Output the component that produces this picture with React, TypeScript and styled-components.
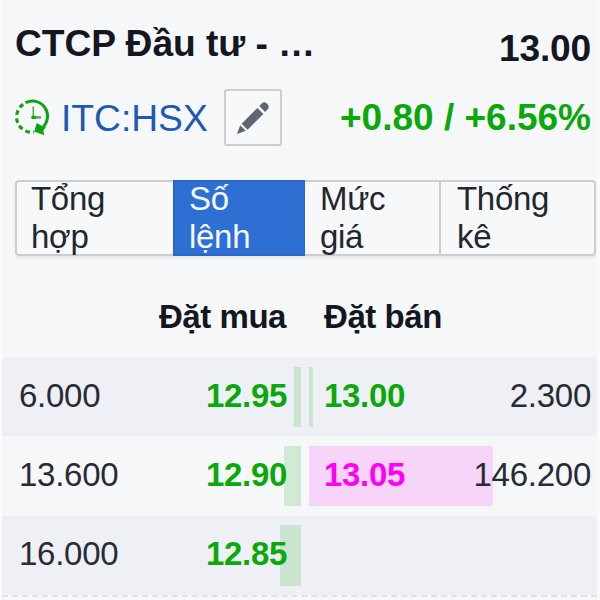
import React from "react";
import styled, { createGlobalStyle } from "styled-components";

const GlobalStyle = createGlobalStyle`
  * { box-sizing: border-box; }
  body { margin: 0; background: #f5f7f9; }
`;

const Panel = styled.main`
  width: 600px;
  height: 600px;
  overflow: hidden;
  display: flex;
  flex-direction: column;
  background: #f5f7f9;
  border-left: 2px solid #fafbfc;
  border-right: 3px solid #f9fafc;
  font-family: "Liberation Sans", Arial, sans-serif;
  color: #1f232b;
`;

const TitleRow = styled.header`
  display: flex;
  justify-content: space-between;
  height: 80px;
  flex: none;
  padding: 22px 6px 0 13px;
  font-size: 37.2px;
  line-height: 42px;
  font-weight: 700;
  color: #14171f;
`;

const Name = styled.span`
  letter-spacing: -0.06px;
  white-space: pre;
`;

const LastPrice = styled.span`
  padding-top: 5px;
  letter-spacing: -0.2px;
`;

const SymbolRow = styled.div`
  display: flex;
  align-items: center;
  height: 75px;
  flex: none;
  padding: 0 6px 0 13px;
`;

const ClockIcon = styled.svg`
  width: 36px;
  height: 38px;
  flex: none;
`;

const SymbolLink = styled.a`
  margin-left: 10px;
  width: 148px;
  font-size: 37.2px;
  line-height: 42px;
  color: #1d5ab0;
`;

const EditButton = styled.button`
  display: grid;
  place-items: center;
  width: 58px;
  height: 57px;
  margin-left: 15px;
  padding: 0;
  border: 2px solid #cccdd0;
  border-radius: 3px;
  background: #f6f8fa;
  flex: none;
`;

const Change = styled.span`
  margin-left: auto;
  padding-top: 1px;
  font-size: 37px;
  line-height: 42px;
  font-weight: 700;
  color: #0aa80a;
  white-space: nowrap;
`;

const Tabs = styled.nav`
  display: grid;
  grid-template-columns: 158px 132px 136px 155px;
  grid-template-rows: 76px;
  width: 581px;
  height: 76px;
  flex: none;
  margin: 25px 0 0 13px;
  border-radius: 4px;
  box-shadow: 0 2px 3px rgba(0, 0, 0, 0.07);
`;

const Tab = styled.button<{ $active?: boolean }>`
  display: flex;
  align-items: flex-start;
  height: 76px;
  padding: 0 14px;
  margin: 0;
  border: 2px solid ${(p) => (p.$active ? "#2a66c4" : "#cccdd0")};
  border-left-width: ${(p) => (p.$active ? "2px" : "1px")};
  border-right-width: ${(p) => (p.$active ? "1px" : "2px")};
  background: ${(p) => (p.$active ? "#2d6fd3" : "#f6f8fa")};
  color: ${(p) => (p.$active ? "#f5f8ff" : "#22262e")};
  font: 33px/38px "Liberation Sans", Arial, sans-serif;
  letter-spacing: -0.3px;
  text-align: left;
  &:first-child { border-left-width: 2px; border-right-width: 0; border-radius: 4px 0 0 4px; }
  &:nth-child(3) { border-left-width: 0; padding-left: 15px; }
  &:last-child { border-left-width: 0; border-radius: 0 4px 4px 0; padding-left: 16px; }
`;

const TabLabel = styled.span`
  display: block;
  width: min-content;
  margin-top: -2px;
`;

const Book = styled.section`
  display: flex;
  flex-direction: column;
  flex: none;
  border-bottom: 2px dashed #dfe1e3;
`;

const BookRow = styled.div<{ $shaded?: boolean }>`
  display: grid;
  grid-template-columns: 303px 1fr;
  height: 79.33px;
  background: ${(p) => (p.$shaded ? "#eef0f5" : "transparent")};
`;

const BookHead = styled(BookRow)`
  height: 101px;
  font-size: 33px;
  font-weight: 700;
  line-height: 38px;
  letter-spacing: -0.45px;
  padding-top: 42px;
  color: #14171f;
`;

const BidHead = styled.span`
  text-align: right;
  padding-right: 19px;
`;

const AskHead = styled.span`
  padding-left: 19px;
`;

const Side = styled.div<{ $ask?: boolean }>`
  position: relative;
  display: flex;
  align-items: center;
  justify-content: space-between;
  padding: ${(p) => (p.$ask ? "0 6px 2px 19px" : "0 18px 2px 17px")};
  font-size: 33px;
  line-height: 38px;
  letter-spacing: -0.3px;
`;

const Depth = styled.i<{ $ask?: boolean; $tone: Tone }>`
  position: absolute;
  top: 9.5px;
  height: 60.5px;
  ${(p) => (p.$ask ? "left: 4px;" : "right: 4.5px;")}
  background: ${(p) => (p.$tone === "ceiling" ? "rgba(255, 20, 240, 0.15)" : "rgba(10, 168, 10, 0.155)")};
`;

const Price = styled.b<{ $tone: Tone }>`
  position: relative;
  color: ${(p) => (p.$tone === "ceiling" ? "#ff00f5" : "#0aa80a")};
`;

const Volume = styled.span`
  position: relative;
  color: #272b34;
  letter-spacing: -0.25px;
`;

type Tone = "up" | "ceiling";
type Quote = { volume: string; price: string; depth: number; tone: Tone };

const levels: { bid: Quote; ask?: Quote }[] = [
  {
    bid: { volume: "6.000", price: "12.95", depth: 7, tone: "up" },
    ask: { volume: "2.300", price: "13.00", depth: 3.5, tone: "up" },
  },
  {
    bid: { volume: "13.600", price: "12.90", depth: 17, tone: "up" },
    ask: { volume: "146.200", price: "13.05", depth: 183.5, tone: "ceiling" },
  },
  { bid: { volume: "16.000", price: "12.85", depth: 20.5, tone: "up" } },
];

const tabs = ["Tổng hợp", "Số lệnh", "Mức giá", "Thống kê"];

export default function App() {
  return (
    <>
      <GlobalStyle />
      <Panel>
        <TitleRow>
          <Name>CTCP Đầu tư - …</Name>
          <LastPrice>13.00</LastPrice>
        </TitleRow>
        <SymbolRow>
          <ClockIcon viewBox="0 0 36 38" fill="none" stroke="#0ca40f">
            <path d="M10.5 3.8A15 15.2 0 0 1 28.3 27.8" strokeWidth="3" />
            <path d="M8.2 5.4A15 15.2 0 0 0 19 33" strokeWidth="3.2" strokeDasharray="4.6 3.4" />
            <path d="M18.3 7.5V19" strokeWidth="1.7" stroke="#55b45a" />
            <path d="M16.6 18.4H26" strokeWidth="2.4" stroke="#45ad49" />
            <path d="M16.6 18.4h4" strokeWidth="3.2" />
            <path d="M21.8 24 19.2 32.6 29.2 36.2 28.4 31.2 31 28.2 26.6 26.8Z" fill="#0ca40f" stroke="none" />
          </ClockIcon>
          <SymbolLink>ITC:HSX</SymbolLink>
          <EditButton aria-label="Edit">
            <svg width="34" height="34" viewBox="0 0 34 34" fill="#5d6673">
              <path d="M1 33 4.2 24.2 9.8 29.8Z" />
              <path d="M5.6 22.7 21.4 6.9 27.4 12.9 11.6 28.7Z" />
              <path d="M23.2 5.1 25.8 2.4Q28.5 0 31.2 2.8T31.8 8.3L29.1 11Z" />
            </svg>
          </EditButton>
          <Change>+0.80 / +6.56%</Change>
        </SymbolRow>
        <Tabs>
          {tabs.map((label, i) => (
            <Tab key={label} $active={i === 1}>
              <TabLabel>{label}</TabLabel>
            </Tab>
          ))}
        </Tabs>
        <Book>
          <BookHead>
            <BidHead>Đặt mua</BidHead>
            <AskHead>Đặt bán</AskHead>
          </BookHead>
          {levels.map(({ bid, ask }, i) => (
            <BookRow key={bid.price} $shaded={i % 2 === 0}>
              <Side>
                <Depth $tone={bid.tone} style={{ width: bid.depth }} />
                <Volume>{bid.volume}</Volume>
                <Price $tone={bid.tone}>{bid.price}</Price>
              </Side>
              {ask && (
                <Side $ask>
                  <Depth $ask $tone={ask.tone} style={{ width: ask.depth }} />
                  <Price $tone={ask.tone}>{ask.price}</Price>
                  <Volume>{ask.volume}</Volume>
                </Side>
              )}
            </BookRow>
          ))}
        </Book>
      </Panel>
    </>
  );
}
